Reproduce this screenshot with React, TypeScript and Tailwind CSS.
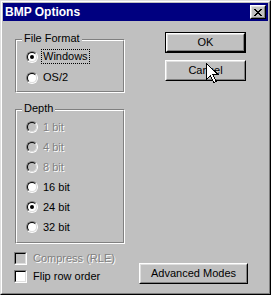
import React from "react";

const FONT = "[font-family:'Liberation_Sans',Arial,sans-serif]";

function Radio({ label, checked, disabled, focused }: { label: string; checked?: boolean; disabled?: boolean; focused?: boolean }) {
  return (
    <div className="flex items-center h-full">
      <div className="w-[12px] h-[12px] rounded-full border border-t-[#808080] border-l-[#808080] border-r-white border-b-white">
        <div className={`w-[10px] h-[10px] rounded-full border border-t-black border-l-black border-r-[#dfdfdf] border-b-[#dfdfdf] flex items-center justify-center ${disabled ? "bg-[#c0c0c0]" : "bg-white"}`}>
          {checked && <div className="w-[4px] h-[4px] rounded-full bg-black" />}
        </div>
      </div>
      <span
        className={`ml-[3px] px-[1px] leading-[13px] border border-dotted ${focused ? "border-black" : "border-transparent"} ${disabled ? "text-[#808080] [text-shadow:1px_1px_0_#fff]" : "text-black"}`}
      >
        {label}
      </span>
    </div>
  );
}

function Check({ label, disabled }: { label: string; disabled?: boolean }) {
  return (
    <div className="flex items-center h-[18px]">
      <div className="w-[13px] h-[13px] border border-t-[#808080] border-l-[#808080] border-r-white border-b-white">
        <div className={`w-[11px] h-[11px] border border-t-black border-l-black border-r-[#dfdfdf] border-b-[#dfdfdf] ${disabled ? "bg-[#c0c0c0]" : "bg-white"}`} />
      </div>
      <span className={`ml-[6px] ${disabled ? "text-[#808080] [text-shadow:1px_1px_0_#fff]" : "text-black"}`}>{label}</span>
    </div>
  );
}

function Group({ label, children, className }: { label: string; children: React.ReactNode; className?: string }) {
  return (
    <div className={`relative border border-t-[#808080] border-l-[#808080] border-r-white border-b-white ${className ?? ""}`}>
      <div className="border border-t-white border-l-white border-r-[#808080] border-b-[#808080] h-full">{children}</div>
      <span className="absolute left-[6px] -top-[8px] px-[2px] bg-[#c0c0c0] leading-[13px]">{label}</span>
    </div>
  );
}

function Button({ label, isDefault, className }: { label: string; isDefault?: boolean; className?: string }) {
  const inner = (
    <div className="w-full h-full border border-t-white border-l-white border-r-black border-b-black">
      <div className="w-full h-full border border-t-[#dfdfdf] border-l-[#dfdfdf] border-r-[#808080] border-b-[#808080] flex items-center justify-center">
        {label}
      </div>
    </div>
  );
  return (
    <div className={`h-[21px] ${isDefault ? "border border-black" : ""} ${className ?? ""}`}>{inner}</div>
  );
}

export default function App() {
  return (
    <div className={`relative w-[271px] h-[295px] bg-[#c0c0c0] text-[11px] text-black ${FONT} border border-t-[#dfdfdf] border-l-[#dfdfdf] border-r-black border-b-black`}>
      <div className="w-full h-full border border-t-white border-l-white border-r-[#808080] border-b-[#808080] p-[1px] flex flex-col">
        {/* Title bar */}
        <div className="h-[18px] bg-[#000080] flex items-center justify-between pl-[2px] pr-[2px]">
          <span className="text-white font-bold text-[12px] leading-none">BMP Options</span>
          <div className="w-[16px] h-[14px] border border-t-white border-l-white border-r-black border-b-black bg-[#c0c0c0]">
            <div className="w-full h-full border border-t-[#dfdfdf] border-l-[#dfdfdf] border-r-[#808080] border-b-[#808080] flex items-center justify-center">
              <svg width="8" height="7" viewBox="0 0 8 7" shapeRendering="crispEdges">
                <path d="M0 0h2v1h-2zM6 0h2v1h-2zM1 1h2v1h-2zM5 1h2v1h-2zM2 2h4v1h-4zM3 3h2v1h-2zM2 4h4v1h-4zM1 5h2v1h-2zM5 5h2v1h-2zM0 6h2v1h-2zM6 6h2v1h-2z" fill="black" />
              </svg>
            </div>
          </div>
        </div>

        {/* Body */}
        <div className="flex flex-1 pl-[11px]">
          <div className="w-[111px] flex flex-col">
            <Group label="File Format" className="ml-[1px] mt-[18px] w-[110px] h-[54px]">
              <div className="pl-[9px] pt-[5px]">
                <div className="h-[21px]"><Radio label="Windows" checked focused /></div>
                <div className="h-[21px]"><Radio label="OS/2" /></div>
              </div>
            </Group>
            <Group label="Depth" className="ml-[1px] mt-[16px] w-[110px] h-[135px]">
              <div className="pl-[9px] pt-[6px]">
                <div className="h-[20px]"><Radio label="1 bit" disabled /></div>
                <div className="h-[20px]"><Radio label="4 bit" disabled /></div>
                <div className="h-[20px]"><Radio label="8 bit" disabled /></div>
                <div className="h-[20px]"><Radio label="16 bit" /></div>
                <div className="h-[20px]"><Radio label="24 bit" checked /></div>
                <div className="h-[20px]"><Radio label="32 bit" /></div>
              </div>
            </Group>
            <div className="mt-[5px]">
              <Check label="Compress (RLE)" disabled />
              <Check label="Flip row order" />
            </div>
          </div>
          <div className="ml-[14px] w-[109px] flex flex-col pt-[11px]">
            <Button label="OK" isDefault className="ml-[26px] w-[81px]" />
            <Button label="Cancel" className="ml-[26px] w-[81px] mt-[7px]" />
            <Button label="Advanced Modes" className="w-[109px] mt-[182px]" />
          </div>
        </div>
      </div>

      {/* Mouse cursor */}
      <svg className="absolute left-[205px] top-[62px]" width="13" height="21" viewBox="0 0 13 21" shapeRendering="crispEdges">
        <path d="M0.5 0.5 L0.5 16.5 L4.5 12.5 L7.5 19.5 L10 18.5 L7 11.5 L12 11.5 Z" fill="white" stroke="black" strokeWidth="1" />
      </svg>
    </div>
  );
}
